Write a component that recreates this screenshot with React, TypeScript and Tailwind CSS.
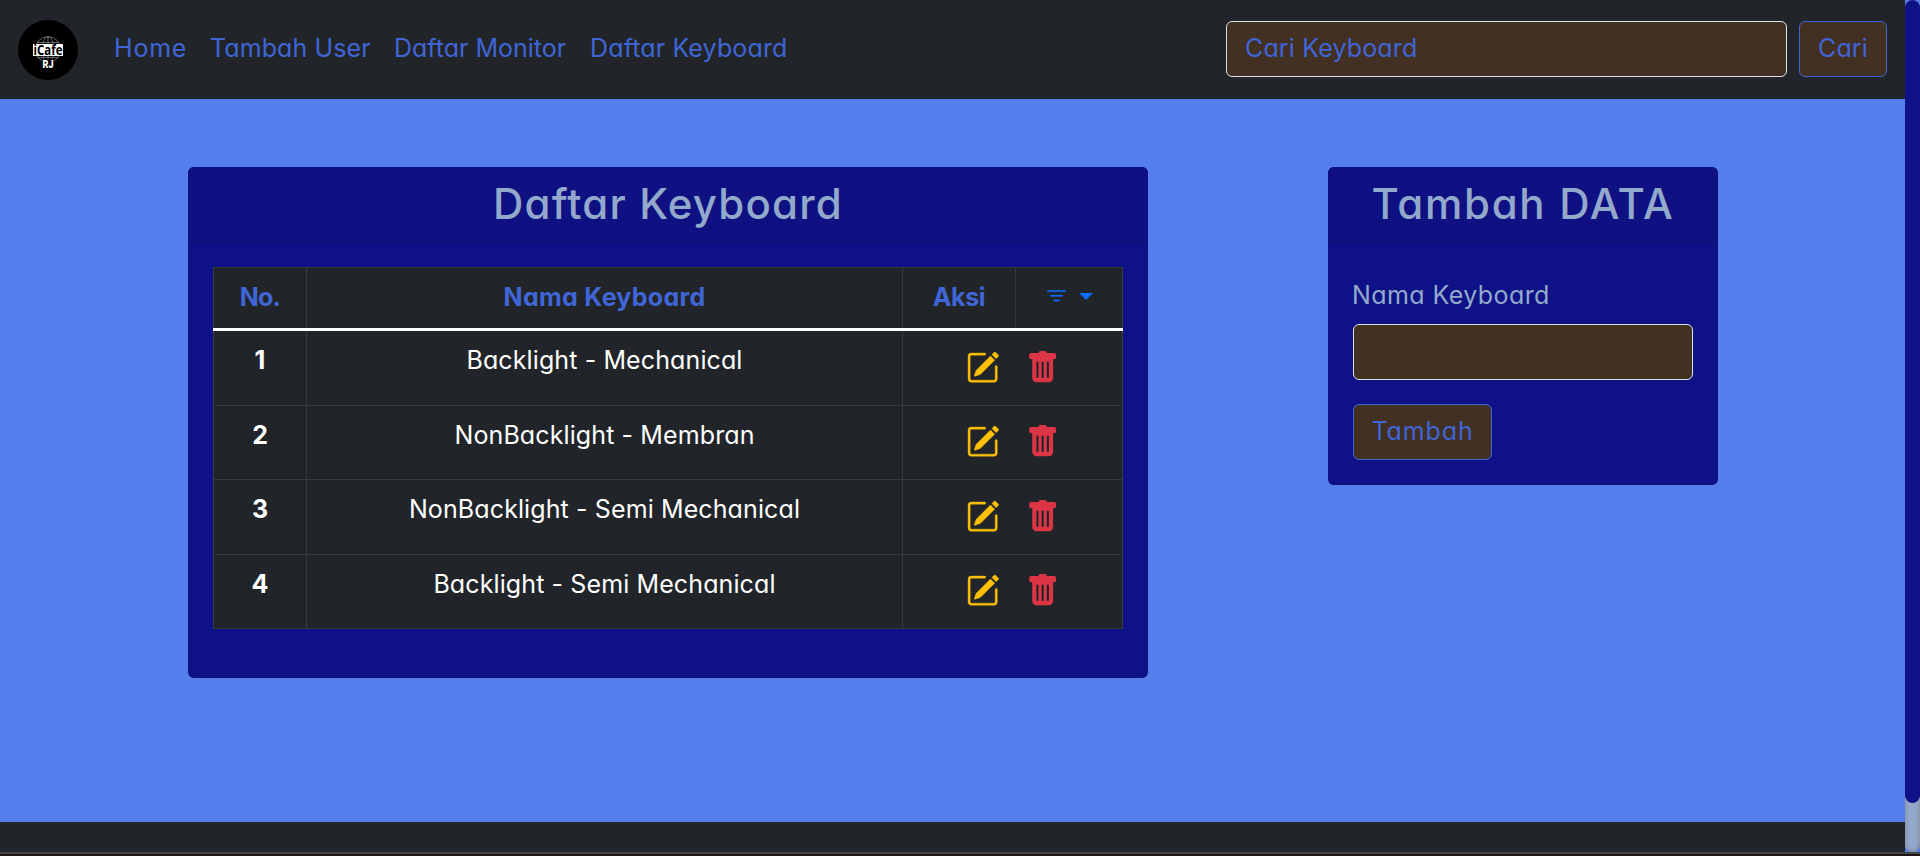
import { BsFilter, BsPencilSquare, BsTrashFill } from "react-icons/bs";

const links = [
  { label: "Home", className: "w-[96px] tracking-[0.8px]" },
  { label: "Tambah User", className: "w-[184px] tracking-[0.1px]" },
  { label: "Daftar Monitor", className: "w-[196px]" },
  { label: "Daftar Keyboard", className: "w-[197px] tracking-[0.14px]" },
];

const rows = [
  { no: 1, name: "Backlight - Mechanical", height: "h-[75px]", icons: "pt-[20px]" },
  { no: 2, name: "NonBacklight - Membran", height: "h-[74px]", icons: "pt-[19px]" },
  { no: 3, name: "NonBacklight - Semi Mechanical", height: "h-[75px]", icons: "pt-[20px]" },
  { no: 4, name: "Backlight - Semi Mechanical", height: "h-[74px]", icons: "pt-[19px]" },
];

function Logo() {
  return (
    <svg viewBox="0 0 60 60" className="size-[60px] shrink-0">
      <circle cx="30" cy="30" r="30" fill="#000" />
      <g fill="none" stroke="#8c8c8c" strokeWidth="0.7">
        <circle cx="30" cy="29.5" r="12.8" />
        <ellipse cx="30" cy="29.5" rx="6" ry="12.8" />
        <path d="M30 16.7v25.6M19 22.5h22M19.5 37.5h21" />
      </g>
      <rect x="15" y="24" width="30" height="12" fill="#fff" />
      <text
        x="15.6"
        y="34.9"
        textLength="28.8"
        lengthAdjust="spacingAndGlyphs"
        fontFamily="'Open Sans', sans-serif"
        fontWeight="700"
        fontSize="14"
        fill="#000"
      >
        iCafe
      </text>
      <rect x="24" y="39.5" width="12" height="9.5" fill="#000" />
      <text
        x="24.6"
        y="48"
        textLength="11"
        lengthAdjust="spacingAndGlyphs"
        fontFamily="Roboto, sans-serif"
        fontWeight="900"
        fontSize="11"
        fill="#fff"
      >
        RJ
      </text>
    </svg>
  );
}

function Navbar() {
  return (
    <nav className="flex h-[99px] items-start bg-[#212529] pt-[20px] pr-[18px] pl-[18px]">
      <Logo />
      <ul className="mt-[9px] ml-[36px] flex leading-[38px] whitespace-nowrap text-[#4065d7]">
        {links.map((link) => (
          <li key={link.label} className={link.className}>
            {link.label}
          </li>
        ))}
      </ul>
      <form className="mt-px ml-auto flex gap-3">
        <input
          placeholder="Cari Keyboard"
          className="h-[56px] w-[561px] rounded-[6px] border border-[#dee2e6] bg-[#423023] pb-[2px] pl-[18px] tracking-[0.15px] outline-none placeholder:text-[#4065d7]"
        />
        <button
          type="button"
          className="h-[56px] w-[88px] rounded-[6px] border border-[#4065d7] bg-[#423023] tracking-[0.1px] text-[#4065d7]"
        >
          Cari
        </button>
      </form>
    </nav>
  );
}

function KeyboardTable() {
  return (
    <div className="mx-[25px] mt-[24px] w-[910px] border-t border-r border-[#373b3e] bg-[#212529] text-center leading-[38px]">
      <div className="grid h-[60px] grid-cols-[93px_596px_113px_107px] font-bold text-[#4065d7]">
        <div className="border-l border-[#373b3e] pt-[10px] tracking-[-0.8px]">No.</div>
        <div className="border-l border-[#373b3e] pt-[10px] tracking-[0.3px]">Nama Keyboard</div>
        <div className="border-l border-[#373b3e] pt-[10px] tracking-[-0.4px]">Aksi</div>
        <div className="flex items-start border-l border-[#373b3e] pt-[16px] pl-[27.5px] text-[#0d6efd]">
          <BsFilter className="size-[25px]" stroke="currentColor" strokeWidth="0.12" />
          <svg viewBox="0 0 14 7" className="mt-[9px] ml-[10.5px] h-[7px] w-[14px]">
            <path d="M0 0h14L7 7z" fill="currentColor" />
          </svg>
        </div>
      </div>
      <div className="-mr-px h-[3px] bg-white" />
      {rows.map((row) => (
        <div
          key={row.no}
          className={`grid grid-cols-[93px_596px_220px] border-b border-[#373b3e] text-white ${row.height}`}
        >
          <div className="border-l border-[#373b3e] pt-[10px] font-bold">{row.no}</div>
          <div className="border-l border-[#373b3e] pt-[10px] tracking-[0.11px]">{row.name}</div>
          <div className={`flex items-start gap-[26.5px] border-l border-[#373b3e] pl-[63px] ${row.icons}`}>
            <BsPencilSquare className="size-[33.33px] text-[#ffc107]" stroke="currentColor" strokeWidth="0.2" />
            <BsTrashFill className="size-[33.33px] text-[#dc3545]" />
          </div>
        </div>
      ))}
    </div>
  );
}

export default function App() {
  return (
    <div className="flex h-[856px] w-[1920px] flex-col overflow-hidden bg-[#537eeb] font-['Inter',sans-serif] text-[25px] [font-feature-settings:'cv11']">
      <div className="flex h-[852px]">
        <div className="flex w-[1905px] flex-col">
          <Navbar />
          <main className="flex h-[723px] items-start gap-[180px] pt-[68px] pl-[188px]">
            <section className="h-[511px] w-[960px] overflow-hidden rounded-[6px] border-b border-[#0d0f73] bg-[#0f1187]">
              <h1 className="h-[76px] border-b border-[#0d0f75] bg-[#0f1082] pt-[12px] text-center text-[42px] leading-[49px] font-medium tracking-[1.2px] text-[#93a9cc]">
                Daftar Keyboard
              </h1>
              <KeyboardTable />
            </section>
            <section className="h-[318px] w-[390px] overflow-hidden rounded-[6px] border-b border-[#0d0f73] bg-[#0f1187]">
              <h1 className="h-[76px] border-b border-[#0d0f75] bg-[#0f1082] pt-[12px] text-center text-[42px] leading-[49px] font-medium tracking-[1.7px] text-[#93a9cc]">
                Tambah DATA
              </h1>
              <form className="flex flex-col items-start px-[25px] pt-[33px]">
                <label className="-ml-px leading-[38px] tracking-[0.42px] text-[#93a9cc]">Nama Keyboard</label>
                <input className="mt-[10px] h-[56px] w-[340px] rounded-[6px] border border-[#dee2e6] bg-[#423023] outline-none" />
                <button
                  type="button"
                  className="mt-[24px] h-[56px] w-[139px] rounded-[6px] border border-[#4065d7] bg-[#423023] tracking-[0.9px] text-[#4065d7]"
                >
                  Tambah
                </button>
              </form>
            </section>
          </main>
          <footer className="h-[30px] bg-[#212529]" />
        </div>
        <div className="w-[15px] bg-[#537eeb]">
          <div className="h-[852px] rounded-[8px] bg-[#93a9cc] shadow-[inset_0_0_5px_gray]">
            <div className="h-[803px] rounded-[8px] bg-[#0f1187]" />
          </div>
        </div>
      </div>
      <div className="h-[2px] bg-[#454545]" />
      <div className="h-[2px] bg-[#1c1818]" />
    </div>
  );
}
